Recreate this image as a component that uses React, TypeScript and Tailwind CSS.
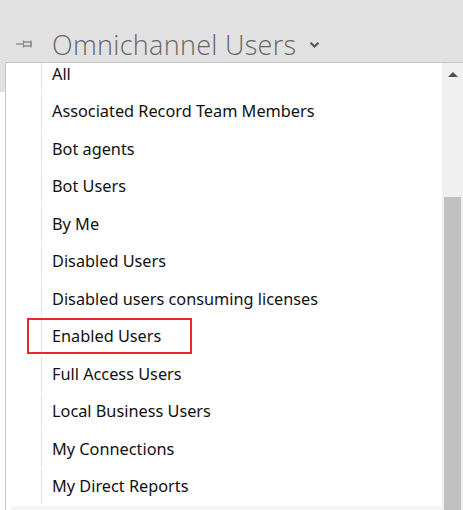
import React from "react";

const views = [
  "All",
  "Associated Record Team Members",
  "Bot agents",
  "Bot Users",
  "By Me",
  "Disabled Users",
  "Disabled users consuming licenses",
  "Enabled Users",
  "Full Access Users",
  "Local Business Users",
  "My Connections",
  "My Direct Reports",
];

function PinIcon() {
  return (
    <svg width="21" height="12" viewBox="0 0 21 12" fill="none" stroke="#8a8a8a" strokeWidth="1.3">
      <path d="M1 6h7" />
      <path d="M8.5 2.5v7" />
      <path d="M8.5 4h7.5v4H8.5" />
      <path d="M16 2.5v7" />
    </svg>
  );
}

function Chevron() {
  return (
    <svg width="11" height="8" viewBox="0 0 11 8" fill="none" stroke="#555" strokeWidth="2.2">
      <path d="M1.5 1.8l4 3.8 4-3.8" />
    </svg>
  );
}

export default function App() {
  return (
    <div
      className="w-[463px] h-[510px] bg-white overflow-hidden relative"
      style={{ fontFamily: '"Noto Sans", "Open Sans", sans-serif' }}
    >
      {/* Header band */}
      <div className="h-[62px] bg-[#e1e1e1] flex items-end">
        <div className="flex items-center h-[36px] pl-[15px]">
          <PinIcon />
          <span
            className="ml-[16px] text-[27px] font-light text-[#666] leading-none tracking-[0.3px]"
            style={{ fontFamily: '"Open Sans", "Noto Sans", sans-serif' }}
          >
            Omnichannel Users
          </span>
          <span className="ml-[13px] mt-[1px]">
            <Chevron />
          </span>
        </div>
      </div>
      <div className="absolute left-0 top-[62px] w-[5px] h-[30px] bg-[#e1e1e1]" />

      {/* Dropdown list */}
      <div className="absolute left-[5px] top-[62px] right-0 bottom-0 border-t border-l border-[#c6c6c6] flex">
        <div className="flex-1 overflow-hidden relative bg-white">
          <div className="-mt-[8px]">
            {views.map((v) => (
              <div key={v} className="h-[37.5px] flex items-stretch">
                <div className="w-[36px] shrink-0 border-r border-[#e3e3e3] my-[1px]" />
                <div className="pl-[10px] flex items-center text-[16.3px] text-[#111] whitespace-nowrap">{v}</div>
              </div>
            ))}
          </div>
          <div className="absolute left-[5px] right-0 bottom-0 h-[4px] bg-[#f5f5f5]" />
          {/* selection highlight */}
          <div className="absolute left-[21px] top-[255px] w-[165px] h-[36px] border-2 border-[#e8262b]" />
        </div>
        {/* Scrollbar */}
        <div className="w-[21px] bg-[#f0f0f0] flex flex-col items-center">
          <div className="h-[22px] flex items-center justify-center pl-[1px]">
            <div className="w-0 h-0 border-l-[5px] border-r-[5px] border-b-[5px] border-l-transparent border-r-transparent border-b-[#505050]" />
          </div>
          <div className="h-[112px]" />
          <div className="w-[17px] flex-1 bg-[#c1c1c1]" />
        </div>
      </div>
    </div>
  );
}
